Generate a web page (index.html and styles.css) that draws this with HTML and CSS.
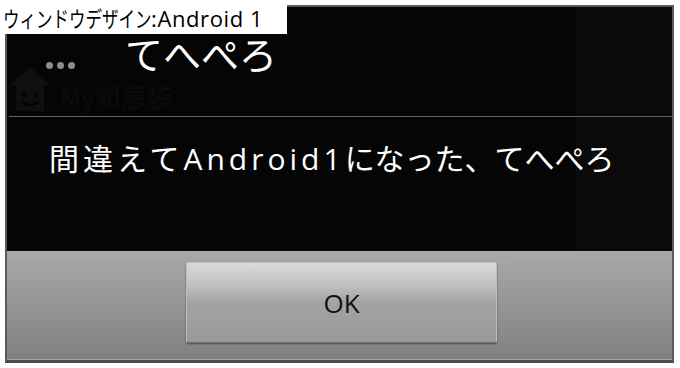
FILE: index.html
```html
<!DOCTYPE html>
<html lang="ja">
<head>
<meta charset="utf-8">
<title>ウィンドウデザイン:Android 1</title>
<link rel="stylesheet" href="styles.css">
</head>
<body>
<div class="label"><span class="label-kana">ウィンドウデザイン</span><span class="label-latin">:Android 1</span></div>
<div class="dialog">
  <div class="ghost" aria-hidden="true">
    <svg class="ghost-home" width="44" height="48" viewBox="0 0 44 48">
      <path d="M2 20 L22 2 L42 20 L36 20 L36 46 L8 46 L8 20 Z" fill="#0f0f0f"/>
      <circle cx="16" cy="30" r="2.5" fill="#050505"/>
      <circle cx="28" cy="30" r="2.5" fill="#050505"/>
      <path d="M13 36 Q22 44 31 36" stroke="#050505" stroke-width="2.5" fill="none"/>
    </svg>
    <span class="ghost-text">My知恵袋</span>
    <div class="ghost-col"></div>
  </div>
  <header class="title-bar">
    <span class="dots"><i></i><i></i><i></i></span>
    <h1 class="title">てへぺろ</h1>
  </header>
  <div class="divider"></div>
  <div class="message"><span class="wide">間違えて</span><span class="wide latin">Android1</span>になった、てへぺろ</div>
  <div class="buttons">
    <button class="btn">OK</button>
  </div>
</div>
</body>
</html>
```
FILE: styles.css
```css
html, body {
  margin: 0;
  padding: 0;
  background: #ffffff;
}
body {
  width: 680px;
  height: 368px;
  position: relative;
  overflow: hidden;
  font-family: "Open Sans", "Noto Sans CJK JP", sans-serif;
}
.label {
  position: absolute;
  left: 0;
  top: 0;
  width: 287px;
  height: 34px;
  background: #ffffff;
  color: #000000;
  font-size: 22px;
  line-height: 34px;
  padding-left: 3px;
  box-sizing: border-box;
  white-space: nowrap;
  z-index: 5;
}
.label-kana {
  display: inline-block;
  font-family: "Noto Sans CJK JP", sans-serif;
  transform: scaleX(0.75);
  transform-origin: left center;
  margin-right: -50px;
}
.label-latin {
  font-family: "Open Sans", sans-serif;
  letter-spacing: 0.6px;
}
.dialog {
  position: relative;
  margin: 5px 0 0 5px;
  width: 669px;
  height: 358px;
  box-sizing: border-box;
  border: 2px solid #5b5b5b;
  border-bottom-width: 3px;
  border-bottom-color: #4a4a4a;
  background: #050505;
  display: flex;
  flex-direction: column;
  overflow: hidden;
}
.ghost {
  position: absolute;
  inset: 0;
  pointer-events: none;
}
.ghost-home {
  position: absolute;
  left: 1px;
  top: 58px;
}
.ghost-text {
  position: absolute;
  left: 53px;
  top: 70px;
  font-family: "Noto Sans CJK JP", sans-serif;
  font-size: 26px;
  color: #0c0c0c;
}
.ghost-col {
  position: absolute;
  right: 0;
  top: 0;
  width: 96px;
  height: 244px;
  background: #0a0a0a;
}
.title-bar {
  position: relative;
  height: 109px;
  display: flex;
  align-items: flex-start;
  padding-left: 39px;
  box-sizing: border-box;
  flex: none;
}
.dots {
  display: flex;
  gap: 4px;
  margin-top: 55px;
}
.dots i {
  width: 7px;
  height: 7px;
  border-radius: 50%;
  background: #8c8c8c;
}
.title {
  margin: 29px 0 0 50px;
  font-family: "Noto Sans CJK JP", sans-serif;
  font-weight: 400;
  font-size: 38px;
  line-height: 34px;
  color: #ffffff;
}
.divider {
  position: relative;
  height: 1px;
  margin-left: 2px;
  background: #626262;
  flex: none;
}
.message {
  position: relative;
  height: 134px;
  box-sizing: border-box;
  padding: 24px 0 0 42px;
  font-size: 30px;
  line-height: 36px;
  color: #ffffff;
  white-space: nowrap;
  flex: none;
}
.wide {
  letter-spacing: 4px;
}
.buttons {
  position: relative;
  flex: 1;
  box-sizing: border-box;
  padding: 11px 0 0 179px;
  background: linear-gradient(#a9a9a9, #808080);
  border-bottom: 1px solid #a4a4a4;
}
.btn {
  width: 311px;
  height: 81px;
  margin: 0;
  padding: 0;
  border: 1px solid #bdbdbd;
  border-bottom-color: #6e6e6e;
  border-radius: 2px;
  background: linear-gradient(#dadada 0%, #bdbdbd 30%, #a3a3a3 50%, #999999 100%);
  box-shadow: 0 1px 2px rgba(0,0,0,0.45);
  font-family: "Open Sans", sans-serif;
  font-size: 26px;
  color: #111111;
  cursor: pointer;
}
```
